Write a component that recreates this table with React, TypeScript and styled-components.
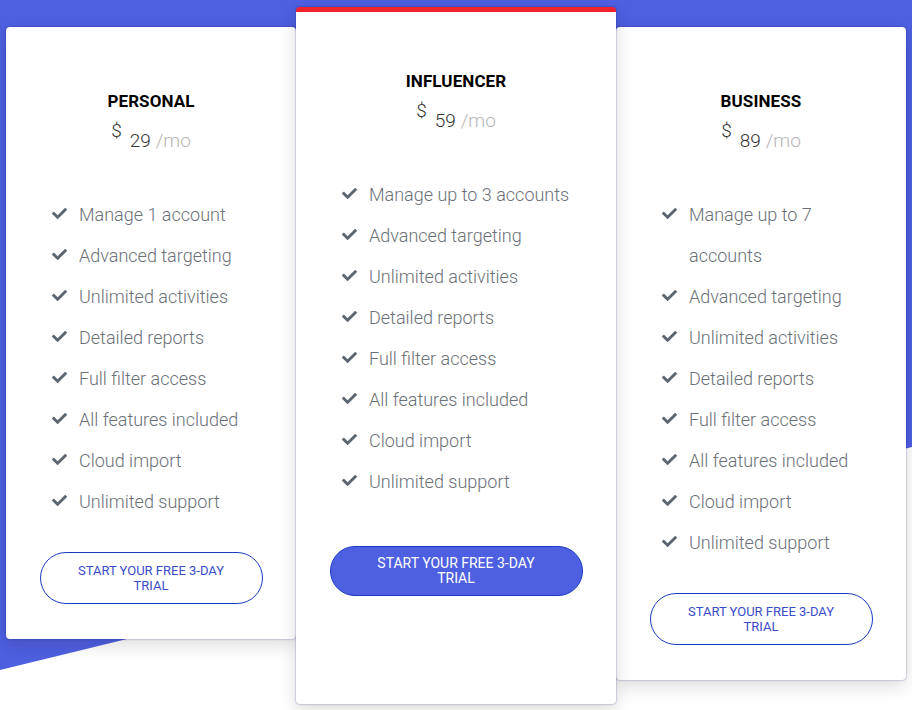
import styled, { createGlobalStyle } from "styled-components";
import { FaCheck } from "react-icons/fa";

const GlobalStyle = createGlobalStyle`
  body {
    margin: 0;
    background: #fff;
    font-family: Roboto, "Liberation Sans", sans-serif;
  }
`;

const Page = styled.div`
  position: relative;
  width: 912px;
  height: 710px;
  overflow: hidden;
  background: #fff;
  &::before {
    content: "";
    position: absolute;
    inset: 0;
    background: #4e5fe1;
    clip-path: polygon(0 0, 100% 0, 100% 447px, 0 670px);
  }
`;

const Row = styled.div`
  position: relative;
  display: flex;
  align-items: flex-start;
  padding: 27px 6px 0 6px;
`;

const Card = styled.div<{ $featured?: boolean; $w: number }>`
  position: relative;
  z-index: ${(p) => (p.$featured ? 2 : 1)};
  width: ${(p) => p.$w}px;
  box-sizing: border-box;
  margin-top: ${(p) => (p.$featured ? "-20px" : "0")};
  padding: ${(p) => (p.$featured ? "59px 0 108px" : "64px 0 35px")};
  background: #fff;
  border-top: ${(p) => (p.$featured ? "5px solid #f2232f" : "none")};
  border-radius: 4px;
  box-shadow: 0 0 2px rgba(10, 20, 120, 0.5), 0 6px 18px rgba(0, 0, 0, 0.14);
  text-align: center;
`;

const Title = styled.h3`
  margin: 0;
  font-size: 17px;
  line-height: 20px;
  font-weight: 700;
  color: #000;
  letter-spacing: 0.1px;
`;

const Price = styled.div`
  margin-top: 15px;
  height: 30px;
  font-weight: 300;
  font-size: 19px;
  line-height: 30px;
  color: #333;
`;

const Currency = styled.span`
  position: relative;
  top: -10px;
  margin-right: 8px;
  font-size: 19px;
`;

const Period = styled.span`
  margin-left: 5px;
  color: #b4b4b4;
`;

const Features = styled.ul`
  list-style: none;
  margin: 38px 0 0;
  padding: 0 46px;
  text-align: left;
`;

const Feature = styled.li`
  display: flex;
  align-items: flex-start;
  font-size: 18px;
  font-weight: 300;
  line-height: 41px;
  color: #6a7077;
  svg {
    flex: none;
    margin: 12px 12px 0 0;
    width: 15px;
    height: 15px;
    color: #5c6670;
  }
`;

const TrialButton = styled.button<{ $featured?: boolean }>`
  display: block;
  box-sizing: border-box;
  width: ${(p) => (p.$featured ? "253px" : "223px")};
  height: ${(p) => (p.$featured ? "50px" : "52px")};
  margin: ${(p) => (p.$featured ? "44px auto 0" : "30px auto 0")};
  padding: 0 36px;
  border-radius: 26px;
  border: 1px solid #1b3cc2;
  background: ${(p) => (p.$featured ? "#4e5fe1" : "#fff")};
  color: ${(p) => (p.$featured ? "#fff" : "#3a4cc9")};
  font-family: Roboto, "Liberation Sans", sans-serif;
  font-size: ${(p) => (p.$featured ? "14px" : "13px")};
  line-height: 15px;
  font-weight: 400;
  text-transform: uppercase;
  cursor: pointer;
`;

const plans = [
  {
    name: "Personal",
    price: 29,
    width: 290,
    features: [
      "Manage 1 account",
      "Advanced targeting",
      "Unlimited activities",
      "Detailed reports",
      "Full filter access",
      "All features included",
      "Cloud import",
      "Unlimited support",
    ],
  },
  {
    name: "Influencer",
    price: 59,
    width: 320,
    featured: true,
    features: [
      "Manage up to 3 accounts",
      "Advanced targeting",
      "Unlimited activities",
      "Detailed reports",
      "Full filter access",
      "All features included",
      "Cloud import",
      "Unlimited support",
    ],
  },
  {
    name: "Business",
    price: 89,
    width: 290,
    features: [
      "Manage up to 7 accounts",
      "Advanced targeting",
      "Unlimited activities",
      "Detailed reports",
      "Full filter access",
      "All features included",
      "Cloud import",
      "Unlimited support",
    ],
  },
];

export default function App() {
  return (
    <>
      <GlobalStyle />
      <Page>
        <Row>
          {plans.map((plan) => (
            <Card key={plan.name} $featured={plan.featured} $w={plan.width}>
              <Title>{plan.name.toUpperCase()}</Title>
              <Price>
                <Currency>$</Currency>
                {plan.price}
                <Period>/mo</Period>
              </Price>
              <Features>
                {plan.features.map((f) => (
                  <Feature key={f}>
                    <FaCheck />
                    <span>{f}</span>
                  </Feature>
                ))}
              </Features>
              <TrialButton $featured={plan.featured}>Start your free 3-day trial</TrialButton>
            </Card>
          ))}
        </Row>
      </Page>
    </>
  );
}
